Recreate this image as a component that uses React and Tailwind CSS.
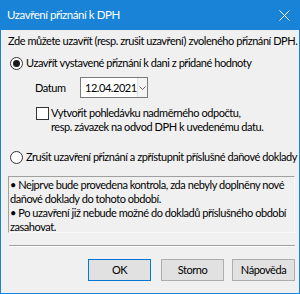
import React from "react";

const Radio = ({ checked }) => (
  <span className="w-[13px] h-[13px] rounded-full border border-[#333] bg-white flex items-center justify-center shrink-0">
    {checked && <span className="w-[7px] h-[7px] rounded-full bg-[#1a1a1a]" />}
  </span>
);

const Button = ({ children, primary, className = "" }) => (
  <button
    className={`w-[63px] h-[22px] text-black bg-[#e1e1e1] border ${
      primary ? "border-[#0078d7]" : "border-[#adadad]"
    } ${className}`}
  >
    {children}
  </button>
);

export default function App() {
  return (
    <div
      className="w-[300px] h-[294px] overflow-hidden bg-[#f0f0f0] border border-t-0 border-[#1883d7] flex flex-col text-[#000] text-[11px] leading-[14px] tracking-[-0.45px] whitespace-nowrap"
      style={{ fontFamily: 'Lato, "Liberation Sans", sans-serif' }}
    >
      {/* Title bar */}
      <div className="h-[30px] shrink-0 bg-[#1883d7] flex items-center justify-between pl-[7px] pr-[8px] text-white -mx-px">
        <span className="text-[11.5px]">Uzavření přiznání k DPH</span>
        <svg width="11" height="11" viewBox="0 0 11 11" className="mr-[2px]">
          <path d="M0.5 0.5 L10.5 10.5 M10.5 0.5 L0.5 10.5" stroke="white" strokeWidth="1" />
        </svg>
      </div>

      <div className="flex flex-col pl-[7px] pr-[4px] pt-[4px]">
        <p className="h-[14px]">Zde můžete uzavřít (resp. zrušit uzavření) zvoleného přiznání DPH.</p>

        <label className="flex items-center gap-[3px] mt-[8px] pl-[2px] h-[14px]">
          <Radio checked />
          <span>Uzavřít vystavené přiznání k dani z přidané hodnoty</span>
        </label>

        <div className="flex items-center mt-[7px] pl-[27px]">
          <span className="w-[45px]">Datum</span>
          <div className="w-[68px] h-[21px] bg-white border border-[#7a7a7a] flex items-center">
            <span className="flex-1 pl-[4px]">12.04.2021</span>
            <span className="w-[14px] h-full border-l border-[#e0e0e0] bg-[#f4f4f4] flex items-center justify-center">
              <svg width="7" height="4" viewBox="0 0 7 4">
                <path d="M0.5 0.5 L3.5 3.5 L6.5 0.5" stroke="#606060" fill="none" strokeWidth="1" />
              </svg>
            </span>
          </div>
        </div>

        <div className="flex items-start gap-[2px] mt-[8px] pl-[28px]">
          <span className="w-[13px] h-[13px] border border-[#333] bg-white shrink-0 mt-px" />
          <span>
            Vytvořit pohledávku nadměrného odpočtu,
            <br />
            resp. závazek na odvod DPH k uvedenému datu.
          </span>
        </div>

        <label className="flex items-center gap-[3px] mt-[16px] pl-[2px] h-[14px]">
          <Radio />
          <span>Zrušit uzavření přiznání a zpřístupnit příslušné daňové doklady</span>
        </label>

        <div className="mt-[12px] h-[57px] shrink-0 border border-t-[#a0a0a0] border-l-[#a0a0a0] border-r-[#f8f8f8] border-b-[#f8f8f8] bg-[#f0f0f0] pl-[1px] pt-[1px]">
          <p>• Nejprve bude provedena kontrola, zda nebyly doplněny nové</p>
          <p>daňové doklady do tohoto období.</p>
          <p>• Po uzavření již nebude možné do dokladů příslušného období</p>
          <p>zasahovat.</p>
        </div>

        <div className="mt-[12px] ml-[1px] border-t border-[#a0a0a0] border-b border-b-white" />

        <div className="flex justify-end mt-[12px]">
          <Button primary>OK</Button>
          <Button className="ml-[10px]">Storno</Button>
          <Button className="ml-[8px]">Nápověda</Button>
        </div>
      </div>
    </div>
  );
}
